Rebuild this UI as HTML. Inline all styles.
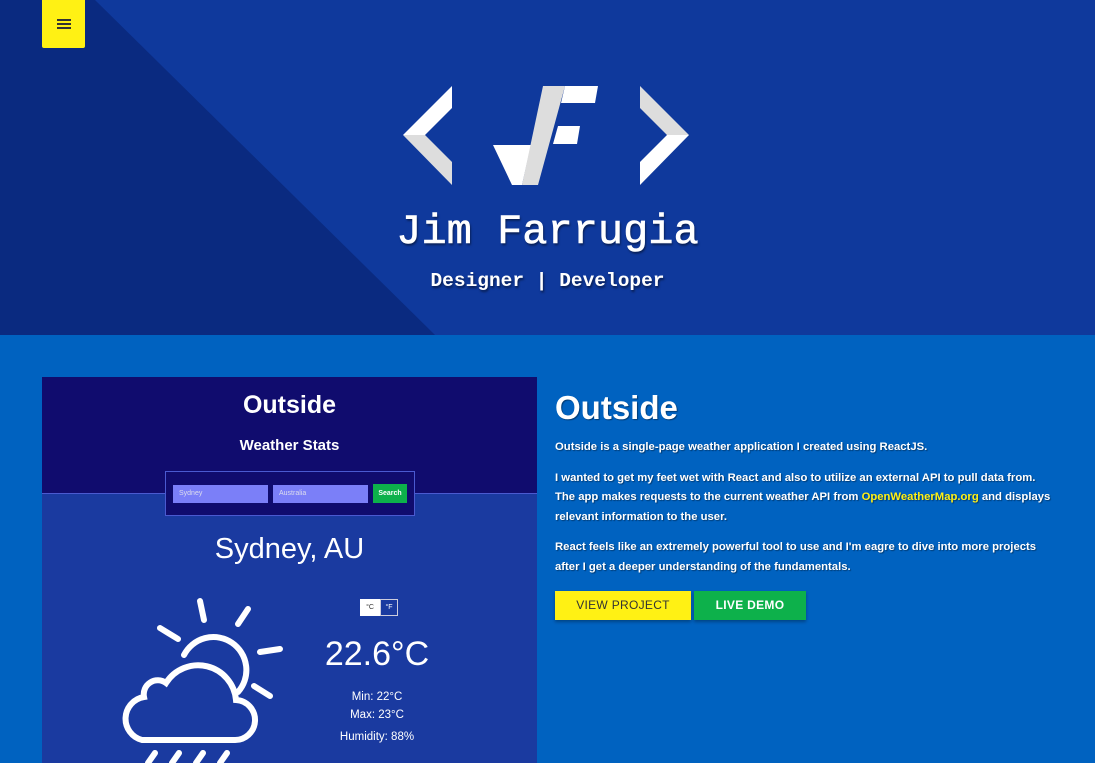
<!DOCTYPE html>
<html><head><meta charset="utf-8"><style>
*{margin:0;padding:0;box-sizing:border-box}
body{width:1095px;height:763px;overflow:hidden;background:#0062c0;font-family:"Liberation Sans",sans-serif;position:relative}
.hero{position:absolute;left:0;top:0;width:1095px;height:335px;background:#0f399c;overflow:hidden}
.menu{position:absolute;left:42px;top:0;width:43px;height:48px;background:#fff114;border-radius:0 0 2px 2px}
.menu i{position:absolute;left:15px;width:14px;height:2px;background:#333}
.name{position:absolute;left:0;width:1095px;text-align:center;color:#fff;font-family:"Liberation Mono",monospace;text-shadow:1px 2px 2px rgba(0,0,0,.5)}
.card{position:absolute;left:42px;top:377px;width:495px;height:386px;background:#1a3aa0;overflow:hidden}
.ch{position:absolute;left:0;top:0;width:495px;height:117px;background:#100c6e;border-bottom:1px solid #4a5ad0}
.c{position:absolute;left:0;width:495px;text-align:center;color:#fff}
.right{position:absolute;left:555px;top:388px;color:#fff;text-shadow:1px 1px 1px rgba(0,0,0,.4)}
.right p{font-size:11.3px;line-height:19.5px;margin-bottom:11px;font-weight:bold}
.btn{position:absolute;top:591px;height:29px;font-size:12px;font-weight:bold;text-align:center;line-height:29px;letter-spacing:.3px;box-shadow:0 2px 3px rgba(0,0,0,.3)}
</style></head><body>
<div class="hero">
<svg width="1095" height="335" style="position:absolute;left:0;top:0">
<polygon points="0,0 95,0 435,335 0,335" fill="#0a2a80"/>
<polygon points="403,135 452,86 452,108 425,135" fill="#fff"/>
<polygon points="403,135 425,135 452,162 452,185" fill="#ddd"/>
<polygon points="689,135 640,86 640,108 667,135" fill="#ddd"/>
<polygon points="689,135 667,135 640,162 640,185" fill="#fff"/>
<polygon points="493,145 531,145 522,185 512,185" fill="#fff"/>
<polygon points="543,86 565,86 538,185 522,185" fill="#ddd"/>
<polygon points="565,86 598,86 595,103 561,103" fill="#fff"/>
<polygon points="558,126 580,126 577,144 553,144" fill="#fff"/>
</svg>
<div class="menu"><i style="top:19px"></i><i style="top:23px"></i><i style="top:27px"></i></div>
<div class="name" style="top:204px;font-size:42px;line-height:56px;-webkit-text-stroke:0.6px #fff">Jim Farrugia</div>
<div class="name" style="top:267px;font-size:19.5px;font-weight:bold;line-height:28px">Designer | Developer</div>
</div>
<div class="card">
<div class="ch"></div>
<div class="c" style="top:14px;font-size:25px;font-weight:bold">Outside</div>
<div class="c" style="top:60px;font-size:15px;font-weight:bold">Weather Stats</div>
<div style="position:absolute;left:123px;top:94px;width:250px;height:45px;background:#100c6e;border:1px solid #4a5ad0"></div>
<div style="position:absolute;left:131px;top:108px;width:95px;height:18px;background:#7b7ff8;color:#dde;font-size:7px;line-height:18px;padding-left:6px">Sydney</div>
<div style="position:absolute;left:231px;top:108px;width:95px;height:18px;background:#7b7ff8;color:#dde;font-size:7px;line-height:18px;padding-left:6px">Australia</div>
<div style="position:absolute;left:331px;top:107px;width:34px;height:19px;background:#0db14b;color:#fff;font-size:7px;font-weight:bold;line-height:19px;text-align:center">Search</div>
<div class="c" style="top:156px;font-size:29px">Sydney, AU</div>
<div style="position:absolute;left:318px;top:222px;width:20px;height:17px;background:#fff;color:#333;font-size:7px;line-height:17px;text-align:center">°C</div>
<div style="position:absolute;left:338px;top:222px;width:18px;height:17px;border:1px solid #ccd;color:#fff;font-size:7px;line-height:15px;text-align:center">°F</div>
<div style="position:absolute;left:250px;top:258px;width:170px;text-align:center;color:#fff;font-size:34px">22.6°C</div>
<div style="position:absolute;left:250px;top:311px;width:170px;text-align:center;color:#fff;font-size:11.5px;line-height:18px">Min: 22°C<br>Max: 23°C</div>
<div style="position:absolute;left:250px;top:354px;width:170px;text-align:center;color:#fff;font-size:11.5px">Humidity: 88%</div>
<svg width="495" height="386" style="position:absolute;left:0;top:0" fill="none" stroke="#fff" stroke-width="6" stroke-linecap="round">
<g transform="translate(-42,-377)">
<path d="M184,655 A33,33 0 1 1 238,692"/>
<line x1="200" y1="601" x2="204" y2="620"/>
<line x1="248" y1="609" x2="238" y2="624"/>
<line x1="260" y1="652" x2="280" y2="649"/>
<line x1="254" y1="686" x2="270" y2="696"/>
<line x1="160" y1="628" x2="178" y2="639"/>
<path d="M142,740 H234 A20,20 0 0 0 236,700 A38,38 0 0 0 166,683 A14,14 0 0 0 144,697 A22,22 0 0 0 142,740 Z"/>
<line x1="148" y1="763" x2="155" y2="753"/>
<line x1="172" y1="763" x2="179" y2="753"/>
<line x1="196" y1="763" x2="203" y2="753"/>
<line x1="220" y1="763" x2="227" y2="753"/>
</g></svg>
</div>
<div class="right">
<div style="font-size:33px;font-weight:bold;line-height:40px;margin-bottom:10px">Outside</div>
<p>Outside is a single-page weather application I created using ReactJS.</p>
<p>I wanted to get my feet wet with React and also to utilize an external API to pull data from.<br>The app makes requests to the current weather API from <span style="color:#fff114">OpenWeatherMap.org</span> and displays<br>relevant information to the user.</p>
<p>React feels like an extremely powerful tool to use and I'm eagre to dive into more projects<br>after I get a deeper understanding of the fundamentals.</p>
</div>
<div class="btn" style="left:555px;width:136px;background:#fff114;color:#333;font-weight:normal">VIEW PROJECT</div>
<div class="btn" style="left:694px;width:112px;background:#0db14b;color:#fff">LIVE DEMO</div>
</body></html>
